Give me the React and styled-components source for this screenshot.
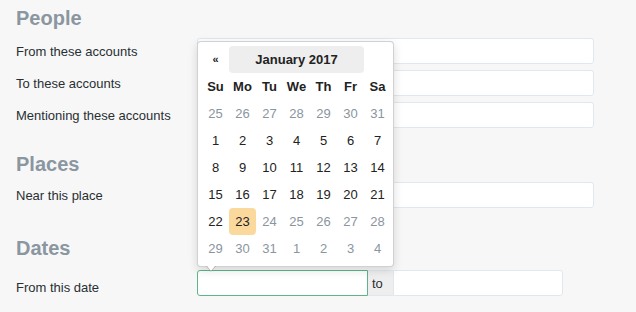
import React from "react";
import styled, { createGlobalStyle } from "styled-components";

const GlobalStyle = createGlobalStyle`
  html, body {
    margin: 0;
    padding: 0;
    background: #f7f7f7;
    font-family: "Liberation Sans", Arial, sans-serif;
    font-size: 13px;
    color: #292f33;
  }
`;

const Page = styled.div`
  width: 636px;
  height: 312px;
  overflow: hidden;
  padding-top: 6px;
  box-sizing: border-box;
`;

const Section = styled.section`
  margin-bottom: ${(p) => p.$gap || 24}px;
`;

const Heading = styled.h2`
  margin: 0 0 ${(p) => p.$below || 8}px 16px;
  font-size: 20px;
  line-height: 24px;
  font-weight: bold;
  color: #8a96a0;
`;

const Row = styled.div`
  display: flex;
  align-items: center;
  height: 26px;
  margin-bottom: 6px;
`;

const Label = styled.label`
  width: 197px;
  padding-left: 16px;
  box-sizing: border-box;
  padding-top: ${(p) => p.$offset || 0}px;
`;

const TextInput = styled.div`
  width: 397px;
  height: 26px;
  box-sizing: border-box;
  background: #fff;
  border: 1px solid #e1e8ed;
  border-radius: 3px;
`;

const DateGroup = styled.div`
  position: relative;
  display: flex;
  height: 26px;
`;

const DateInput = styled.div`
  width: ${(p) => p.$width}px;
  height: 26px;
  box-sizing: border-box;
  background: #fff;
  border: 1px solid ${(p) => (p.$focused ? "#5fb58a" : "#e1e8ed")};
  border-radius: ${(p) => (p.$focused ? "3px 0 0 3px" : "0 3px 3px 0")};
`;

const Addon = styled.span`
  width: 25px;
  height: 26px;
  box-sizing: border-box;
  background: #eee;
  border-top: 1px solid #e1e8ed;
  border-bottom: 1px solid #e1e8ed;
  display: flex;
  align-items: center;
  padding-left: 4px;
`;

const Popup = styled.div`
  position: absolute;
  left: 0;
  bottom: calc(100% + 3px);
  width: 197px;
  box-sizing: border-box;
  padding: 4px;
  background: #fff;
  border: 1px solid rgba(0, 0, 0, 0.18);
  border-radius: 4px;
  box-shadow: 0 3px 10px rgba(0, 0, 0, 0.14);

  &::before,
  &::after {
    content: "";
    position: absolute;
    left: 8px;
    border-left: 5px solid transparent;
    border-right: 5px solid transparent;
  }
  &::before {
    bottom: -6px;
    border-top: 6px solid rgba(0, 0, 0, 0.2);
  }
  &::after {
    bottom: -5px;
    left: 9px;
    border-left-width: 4px;
    border-right-width: 4px;
    border-top: 5px solid #fff;
  }
`;

const Grid = styled.div`
  display: grid;
  grid-template-columns: repeat(7, 27px);
  grid-auto-rows: 27px;
`;

const Cell = styled.div`
  display: flex;
  align-items: center;
  justify-content: center;
  border-radius: 4px;
  font-size: 13px;
  font-weight: ${(p) => (p.$bold ? "bold" : "normal")};
  color: ${(p) => (p.$muted ? "#8b959e" : "#222")};
  background: ${(p) => (p.$today ? "#fbd99d" : "transparent")};
  grid-column: ${(p) => (p.$span ? `span ${p.$span}` : "auto")};
`;

const MonthSwitch = styled(Cell)`
  background: #eee;
  font-weight: bold;
  color: #222;
`;

const Prev = styled(Cell)`
  font-size: 11px;
  font-weight: bold;
  padding-bottom: 2px;
`;

const weekdays = ["Su", "Mo", "Tu", "We", "Th", "Fr", "Sa"];

function buildDays() {
  const days = [];
  [25, 26, 27, 28, 29, 30, 31].forEach((d) => days.push({ d, muted: true }));
  for (let d = 1; d <= 31; d++) days.push({ d, muted: d > 23, today: d === 23 });
  [1, 2, 3, 4].forEach((d) => days.push({ d, muted: true }));
  return days;
}

function Calendar() {
  return (
    <Popup>
      <Grid>
        <Prev>«</Prev>
        <MonthSwitch $span={5}>January 2017</MonthSwitch>
        <Cell />
        {weekdays.map((w) => (
          <Cell key={w} $bold>
            {w}
          </Cell>
        ))}
        {buildDays().map((day, i) => (
          <Cell key={i} $muted={day.muted} $today={day.today}>
            {day.d}
          </Cell>
        ))}
      </Grid>
    </Popup>
  );
}

export default function App() {
  return (
    <>
      <GlobalStyle />
      <Page>
        <Section $gap={24}>
          <Heading $below={8}>People</Heading>
          <Row>
            <Label>From these accounts</Label>
            <TextInput />
          </Row>
          <Row>
            <Label>To these accounts</Label>
            <TextInput />
          </Row>
          <Row>
            <Label>Mentioning these accounts</Label>
            <TextInput />
          </Row>
        </Section>
        <Section $gap={28}>
          <Heading $below={6}>Places</Heading>
          <Row>
            <Label>Near this place</Label>
            <TextInput />
          </Row>
        </Section>
        <Section>
          <Heading $below={10}>Dates</Heading>
          <Row>
            <Label $offset={8}>From this date</Label>
            <DateGroup>
              <Calendar />
              <DateInput $width={171} $focused />
              <Addon>to</Addon>
              <DateInput $width={170} />
            </DateGroup>
          </Row>
        </Section>
      </Page>
    </>
  );
}
